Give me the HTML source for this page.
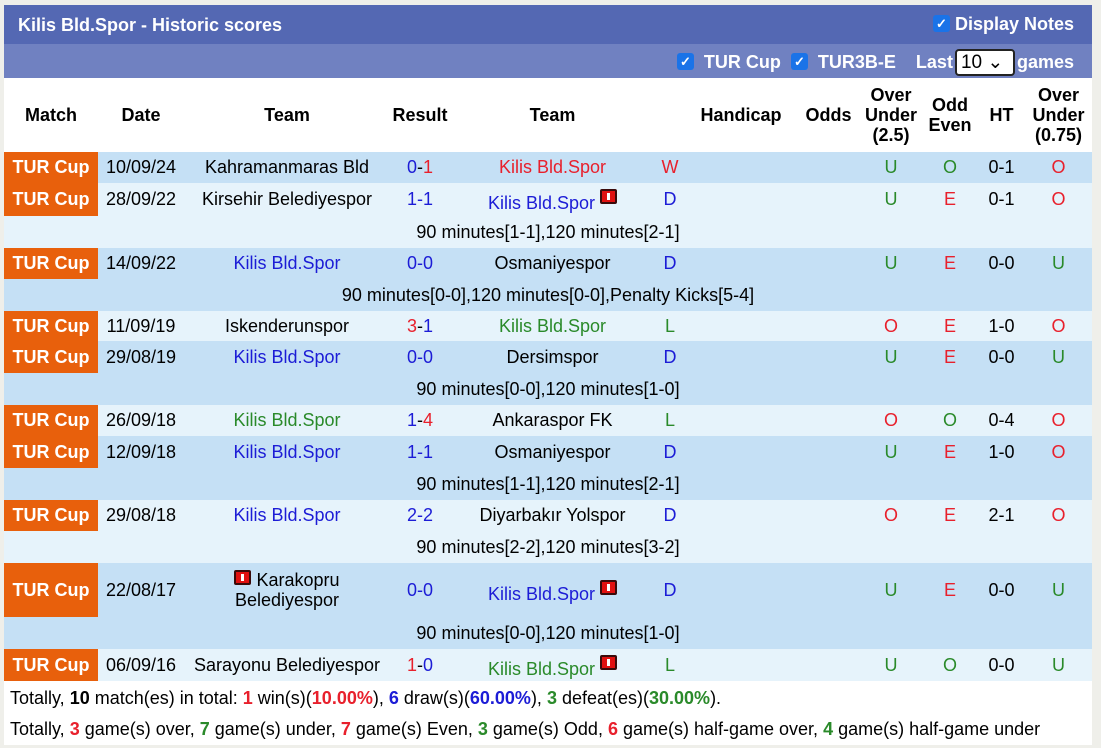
<!DOCTYPE html>
<html><head><meta charset="utf-8"><style>
body{margin:0;background:#efefea;font-family:"Liberation Sans",Arial,sans-serif;width:1101px;height:748px;overflow:hidden;position:relative}
#c{position:absolute;left:4px;top:5px;width:1088px;background:#fff}
.t1{height:39px;background:#5468b3;color:#fff;font-weight:bold;font-size:18px;position:relative}
.t2{height:34px;background:#7081c1;color:#fff;font-weight:bold;font-size:18px;position:relative}
.cb{display:inline-block;width:17px;height:17px;background:#1a73e8;border-radius:3px;color:#fff;font-size:13px;line-height:17px;text-align:center;vertical-align:2px}
table{border-collapse:collapse;table-layout:fixed;width:1088px;font-size:18px}
td{padding:0;text-align:center;white-space:nowrap}
th{font-weight:bold;font-size:18px;height:72px;line-height:20px}
.m{background:#e8600c;color:#fff;font-weight:bold;font-size:18px}
.d td{background:#c5e0f5}.l td{background:#e6f3fb}
.d td.m,.l td.m{background:#e8600c}
.b{color:#1c1cd6}.r{color:#e8202c}.g{color:#2a8a2a}
.rc{display:inline-block;width:13px;height:11px;background:#e01010;border:2px solid #3a0a0a;border-radius:2px;position:relative;vertical-align:1px}
.rc:after{content:"";position:absolute;left:5px;top:2px;width:3px;height:7px;background:#fff}
.f{font-size:18px;height:31px;line-height:31px;padding-left:6px;background:#fff}
</style></head><body>
<div id="c">
<div class="t1"><span style="position:absolute;left:14px;top:10px">Kilis Bld.Spor - Historic scores</span><span style="position:absolute;right:18px;top:9px"><span class="cb">✓</span> Display Notes</span></div>
<div class="t2"><span style="position:absolute;right:18px;top:5px"><span class="cb">✓</span> &nbsp;TUR Cup &nbsp;<span class="cb">✓</span> &nbsp;TUR3B-E &nbsp;&nbsp; Last<span style="display:inline-block;background:#fff;color:#000;font-weight:normal;border:2px solid #222;border-radius:4px;width:52px;height:23px;line-height:23px;text-align:left;padding-left:4px;font-size:19px;margin:0 2px">10 ⌄</span>games</span></div>
<table>
<colgroup><col width="94"><col width="86"><col width="206"><col width="60"><col width="205"><col width="30"><col width="112"><col width="63"><col width="62"><col width="56"><col width="47"><col width="67"></colgroup>
<tr><th>Match</th><th>Date</th><th>Team</th><th>Result</th><th>Team</th><th></th><th>Handicap</th><th>Odds</th><th>Over<br>Under<br>(2.5)</th><th>Odd<br>Even</th><th>HT</th><th>Over<br>Under<br>(0.75)</th></tr>
<tr class="d" style="height:31px"><td class="m">TUR Cup</td><td>10/09/24</td><td>Kahramanmaras Bld</td><td><span class="b">0</span>-<span class="r">1</span></td><td class="r">Kilis Bld.Spor</td><td class="r">W</td><td></td><td></td><td class="g">U</td><td class="g">O</td><td>0-1</td><td class="r">O</td></tr>
<tr class="l" style="height:33px"><td class="m">TUR Cup</td><td>28/09/22</td><td>Kirsehir Belediyespor</td><td class="b">1-1</td><td class="b"><span style="position:relative;top:4px">Kilis Bld.Spor</span> <span class="rc"></span></td><td class="b">D</td><td></td><td></td><td class="g">U</td><td class="r">E</td><td>0-1</td><td class="r">O</td></tr>
<tr class="l" style="height:32px"><td colspan="12">90 minutes[1-1],120 minutes[2-1]</td></tr>
<tr class="d" style="height:31px"><td class="m">TUR Cup</td><td>14/09/22</td><td class="b">Kilis Bld.Spor</td><td class="b">0-0</td><td>Osmaniyespor</td><td class="b">D</td><td></td><td></td><td class="g">U</td><td class="r">E</td><td>0-0</td><td class="g">U</td></tr>
<tr class="d" style="height:32px"><td colspan="12">90 minutes[0-0],120 minutes[0-0],Penalty Kicks[5-4]</td></tr>
<tr class="l" style="height:30px"><td class="m">TUR Cup</td><td>11/09/19</td><td>Iskenderunspor</td><td><span class="r">3</span>-<span class="b">1</span></td><td class="g">Kilis Bld.Spor</td><td class="g">L</td><td></td><td></td><td class="r">O</td><td class="r">E</td><td>1-0</td><td class="r">O</td></tr>
<tr class="d" style="height:32px"><td class="m">TUR Cup</td><td>29/08/19</td><td class="b">Kilis Bld.Spor</td><td class="b">0-0</td><td>Dersimspor</td><td class="b">D</td><td></td><td></td><td class="g">U</td><td class="r">E</td><td>0-0</td><td class="g">U</td></tr>
<tr class="d" style="height:32px"><td colspan="12">90 minutes[0-0],120 minutes[1-0]</td></tr>
<tr class="l" style="height:31px"><td class="m">TUR Cup</td><td>26/09/18</td><td class="g">Kilis Bld.Spor</td><td><span class="b">1</span>-<span class="r">4</span></td><td>Ankaraspor FK</td><td class="g">L</td><td></td><td></td><td class="r">O</td><td class="g">O</td><td>0-4</td><td class="r">O</td></tr>
<tr class="d" style="height:32px"><td class="m">TUR Cup</td><td>12/09/18</td><td class="b">Kilis Bld.Spor</td><td class="b">1-1</td><td>Osmaniyespor</td><td class="b">D</td><td></td><td></td><td class="g">U</td><td class="r">E</td><td>1-0</td><td class="r">O</td></tr>
<tr class="d" style="height:32px"><td colspan="12">90 minutes[1-1],120 minutes[2-1]</td></tr>
<tr class="l" style="height:31px"><td class="m">TUR Cup</td><td>29/08/18</td><td class="b">Kilis Bld.Spor</td><td class="b">2-2</td><td>Diyarbakır Yolspor</td><td class="b">D</td><td></td><td></td><td class="r">O</td><td class="r">E</td><td>2-1</td><td class="r">O</td></tr>
<tr class="l" style="height:32px"><td colspan="12">90 minutes[2-2],120 minutes[3-2]</td></tr>
<tr class="d" style="height:54px"><td class="m">TUR Cup</td><td>22/08/17</td><td style="line-height:20px"><span class="rc"></span> Karakopru<br>Belediyespor</td><td class="b">0-0</td><td class="b"><span style="position:relative;top:4px">Kilis Bld.Spor</span> <span class="rc"></span></td><td class="b">D</td><td></td><td></td><td class="g">U</td><td class="r">E</td><td>0-0</td><td class="g">U</td></tr>
<tr class="d" style="height:32px"><td colspan="12">90 minutes[0-0],120 minutes[1-0]</td></tr>
<tr class="l" style="height:32px"><td class="m">TUR Cup</td><td>06/09/16</td><td>Sarayonu Belediyespor</td><td><span class="r">1</span>-<span class="b">0</span></td><td class="g"><span style="position:relative;top:4px">Kilis Bld.Spor</span> <span class="rc"></span></td><td class="g">L</td><td></td><td></td><td class="g">U</td><td class="g">O</td><td>0-0</td><td class="g">U</td></tr>
</table>
<div style="height:2px;background:#fff"></div>
<div class="f">Totally, <b>10</b> match(es) in total: <b class="r">1</b> win(s)(<b class="r">10.00%</b>), <b class="b">6</b> draw(s)(<b class="b">60.00%</b>), <b class="g">3</b> defeat(es)(<b class="g">30.00%</b>).</div>
<div class="f">Totally, <b class="r">3</b> game(s) over, <b class="g">7</b> game(s) under, <b class="r">7</b> game(s) Even, <b class="g">3</b> game(s) Odd, <b class="r">6</b> game(s) half-game over, <b class="g">4</b> game(s) half-game under</div>
</div>
</body></html>
